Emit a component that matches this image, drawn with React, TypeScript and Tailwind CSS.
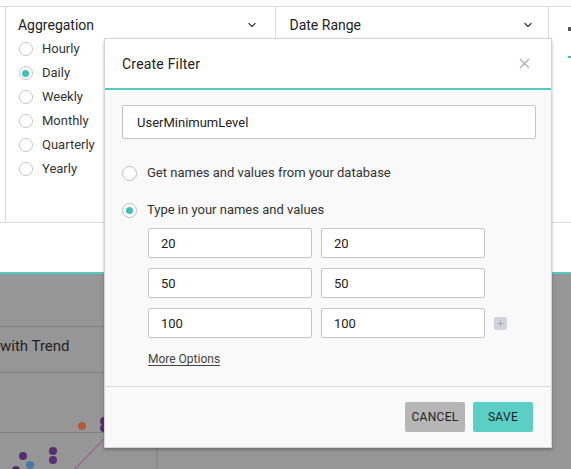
import { ChevronDown, X, Plus } from "lucide-react";

const font = { fontFamily: "Roboto, 'Liberation Sans', sans-serif" };

function Radio({ checked, label }: { checked?: boolean; label: string }) {
  return (
    <div className="flex items-center gap-[9px] h-[24px]">
      <span className="w-[14px] h-[14px] rounded-full border border-[#c4c4c4] bg-white flex items-center justify-center">
        {checked && <span className="w-[7px] h-[7px] rounded-full bg-[#3fc1b3]" />}
      </span>
      <span className="text-[13px] text-[#333]">{label}</span>
    </div>
  );
}

function ValueInput({ value }: { value: string }) {
  return (
    <div className="w-[164px] h-[30px] bg-white border border-[#c4c4c4] rounded-[2px] flex items-center px-[12px] pt-[1px] text-[13px] text-[#222]">
      {value}
    </div>
  );
}

export default function App() {
  const rows = ["20", "50", "100"];
  return (
    <div className="relative w-[571px] h-[469px] overflow-hidden bg-white" style={font}>
      {/* page behind */}
      <div className="pt-[6px]">
        <div className="border-t border-[#dcdcdc] h-[217px] border-b flex">
          <div className="w-[5px]" />
          <div className="w-[272px] border-l border-r border-[#dcdcdc] px-[12px] pt-[8px]">
            <div className="flex items-center justify-between h-[20px]">
              <span className="text-[14px] text-[#222]">Aggregation</span>
              <ChevronDown className="w-[12px] h-[12px] text-[#444] mr-[5px]" strokeWidth={2.5} />
            </div>
            <div className="pl-[1px] mt-[2px]">
              <Radio label="Hourly" />
              <Radio checked label="Daily" />
              <Radio label="Weekly" />
              <Radio label="Monthly" />
              <Radio label="Quarterly" />
              <Radio label="Yearly" />
            </div>
          </div>
          <div className="w-[273px] border-r border-[#dcdcdc] px-[13px] pt-[8px]">
            <div className="flex items-center justify-between h-[20px]">
              <span className="text-[14px] text-[#222]">Date Range</span>
              <ChevronDown className="w-[12px] h-[12px] text-[#444] mr-[1px]" strokeWidth={2.5} />
            </div>
          </div>
          <div className="flex-1 pl-[19px] pt-[20px]">
            <div className="w-[3px] h-[4px] bg-[#555]" />
            <div className="w-[3px] h-[2px] bg-[#3fc1b3] mt-[25px]" />
          </div>
        </div>
        <div className="h-[49px]" />
        <div className="h-[2px] bg-[#4fcabd]" />
        {/* dimmed chart area */}
        <div className="relative h-[195px] bg-[#969696]">
          <div className="h-[53px] border-b border-[#808080] w-[520px]" />
          <div className="h-[46px] border-b border-[#808080] w-[520px] flex items-center pb-[6px]">
            <span className="text-[15px] text-[#222]">with Trend</span>
          </div>
          <div className="h-[60px] border-b border-[#808080] w-[520px]" />
          <svg className="absolute left-0 top-0" width="571" height="195">
            <line x1="157" y1="159" x2="157" y2="195" stroke="#808080" strokeWidth="1" />
            <line x1="104" y1="165" x2="74" y2="196" stroke="#9a6a8e" strokeWidth="1.5" />
            <circle cx="82" cy="152" r="4" fill="#b55a3c" />
            <circle cx="104" cy="147" r="4" fill="#56306e" />
            <circle cx="104" cy="154" r="4" fill="#56306e" />
            <circle cx="53" cy="177" r="4" fill="#56306e" />
            <circle cx="53" cy="186" r="4" fill="#56306e" />
            <circle cx="23" cy="182" r="4" fill="#56306e" />
            <circle cx="30" cy="191" r="4" fill="#4a78a6" />
            <circle cx="16" cy="196" r="4" fill="#56306e" />
          </svg>
        </div>
      </div>

      {/* modal */}
      <div className="absolute left-[104px] top-[38px] w-[448px] border border-[#d4d4d4] shadow-[0_2px_3px_rgba(0,0,0,0.25)] bg-[#f9f9f9] flex flex-col">
        <div className="h-[51px] bg-white border-b-2 border-[#4fcabd] flex items-center justify-between pl-[17px] pr-[18px]">
          <span className="text-[14px] text-[#222] tracking-[0.2px] pt-[1px]">Create Filter</span>
          <X className="w-[17px] h-[17px] text-[#aaa]" strokeWidth={1.6} />
        </div>
        <div className="h-[297px] border-b border-[#dcdce2] pl-[17px] pr-[15px] pt-[15px]">
          <div className="h-[34px] bg-white border border-[#c4c4c4] rounded-[2px] flex items-center px-[14px] pt-[2px] text-[13px] text-[#222]">
            UserMinimumLevel
          </div>
          <div className="mt-[26px] h-[16px] flex items-center gap-[10px]">
            <span className="w-[15px] h-[15px] rounded-full border border-[#bdbdbd] bg-white" />
            <span className="text-[13px] text-[#333]">Get names and values from your database</span>
          </div>
          <div className="mt-[21px] h-[16px] flex items-center gap-[10px]">
            <span className="w-[15px] h-[15px] rounded-full border border-[#bdbdbd] bg-white flex items-center justify-center">
              <span className="w-[7px] h-[7px] rounded-full bg-[#3fc1b3]" />
            </span>
            <span className="text-[13px] text-[#333]">Type in your names and values</span>
          </div>
          <div className="mt-[10px] ml-[26px] flex flex-col gap-[10px]">
            {rows.map((v, i) => (
              <div key={v} className="flex items-center gap-[9px]">
                <ValueInput value={v} />
                <ValueInput value={v} />
                {i === rows.length - 1 && (
                  <span className="w-[13px] h-[13px] bg-[#d2d2da] rounded-[2px] flex items-center justify-center">
                    <Plus className="w-[9px] h-[9px] text-[#8a8a92]" strokeWidth={1.5} />
                  </span>
                )}
              </div>
            ))}
          </div>
          <div className="mt-[12px] ml-[26px] text-[12px] text-[#444] underline underline-offset-2">More Options</div>
        </div>
        <div className="h-[60px] flex items-center justify-end gap-[8px] pr-[18px]">
          <button className="w-[60px] h-[30px] bg-[#b6b6b6] rounded-[2px] text-[12px] text-[#222] tracking-[0.3px]">CANCEL</button>
          <button className="w-[60px] h-[30px] bg-[#5bcfc4] rounded-[2px] text-[12px] text-[#222] tracking-[0.3px]">SAVE</button>
        </div>
      </div>
    </div>
  );
}
